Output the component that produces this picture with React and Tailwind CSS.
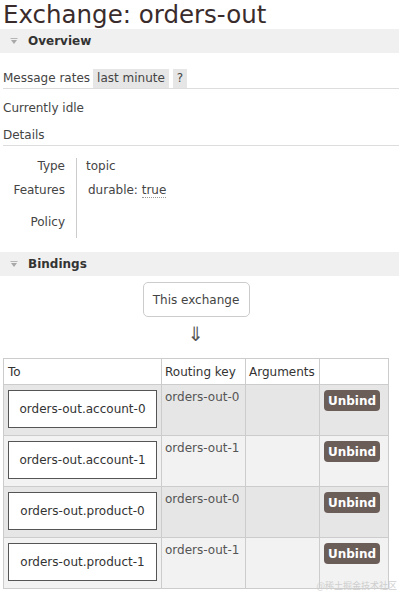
import React from "react";

const F = { fontFamily: '"DejaVu Sans", Verdana, sans-serif' };

function Tri() {
  return (
    <svg width="8" height="7" viewBox="0 0 8 7" className="block">
      <line x1="0.5" y1="0.5" x2="7.5" y2="0.5" stroke="#b5b5b5" strokeWidth="1" />
      <path d="M1 2 L7 2 L4 6 Z" fill="#a8a8a8" />
    </svg>
  );
}

function SectionBar({ title }) {
  return (
    <div className="h-[24px] bg-[#f0f0f0] flex items-center pl-[10px]">
      <Tri />
      <span className="ml-[10px] text-[12px] font-bold text-[#333] leading-[16px]">{title}</span>
    </div>
  );
}

const rows = [
  { to: "orders-out.account-0", key: "orders-out-0" },
  { to: "orders-out.account-1", key: "orders-out-1" },
  { to: "orders-out.product-0", key: "orders-out-0" },
  { to: "orders-out.product-1", key: "orders-out-1" },
];

export default function App() {
  return (
    <div className="relative w-[399px] h-[595px] bg-white overflow-hidden text-[#444]" style={F}>
      <h1 className="h-[29px] pl-[3px] text-[24.5px] leading-[29px] font-normal text-[#3a2c2c] whitespace-nowrap">
        Exchange: orders-out
      </h1>
      <SectionBar title="Overview" />

      <div className="mt-[16px] ml-[3px] border-b border-[#dddddd] flex items-stretch text-[12px] leading-[19px]">
        <span className="h-[19px] pr-[3px]">Message rates</span>
        <span className="h-[19px] bg-[#e6e6e6] px-[4px]">last minute</span>
        <span className="h-[19px] bg-[#e6e6e6] px-[4px] ml-[4px]">?</span>
      </div>

      <div className="mt-[11px] ml-[3px] text-[12px] leading-[16px]">Currently idle</div>
      <div className="mt-[11px] ml-[3px] pb-[2px] border-b border-[#dddddd] text-[12px] leading-[16px]">Details</div>

      <div className="mt-[12px] flex text-[12px] leading-[16px]">
        <div className="w-[76px] pr-[11px] text-right flex flex-col">
          <div className="h-[16px]">Type</div>
          <div className="h-[16px] mt-[8px]">Features</div>
          <div className="h-[16px] mt-[16px]">Policy</div>
          <div className="h-[8px]" />
        </div>
        <div className="border-l border-[#cccccc] pl-[9px] flex flex-col">
          <div className="h-[16px]">topic</div>
          <div className="h-[16px] mt-[8px] ml-[2px]">
            durable: <span className="border-b border-dotted border-[#999]">true</span>
          </div>
        </div>
      </div>

      <div className="mt-[14px]">
        <SectionBar title="Bindings" />
      </div>

      <div className="ml-[3px] w-[386px] flex flex-col items-center">
        <div className="mt-[6px] w-[107px] h-[35px] border border-[#cccccc] rounded-[5px] flex items-center justify-center text-[12px] text-[#444]">
          This exchange
        </div>
        <div className="h-[41px] flex items-start justify-center pt-[5px] text-[20px] leading-[24px] text-[#555]">
          ⇓
        </div>
      </div>

      <div className="ml-[3px] w-[386px] border-l border-t border-[#cccccc] text-[12px] leading-[16px]">
        <div className="flex bg-white text-[#333]">
          <div className="w-[158px] h-[26px] border-r border-b border-[#cccccc] pl-[4px] pt-[5px]">To</div>
          <div className="w-[84px] h-[26px] border-r border-b border-[#cccccc] pl-[3px] pt-[5px]">Routing key</div>
          <div className="w-[74px] h-[26px] border-r border-b border-[#cccccc] pl-[3px] pt-[5px]">Arguments</div>
          <div className="w-[69px] h-[26px] border-r border-b border-[#cccccc]" />
        </div>
        {rows.map((r, i) => (
          <div key={i} className={"flex " + (i % 2 === 0 ? "bg-[#e6e6e6]" : "bg-[#f2f2f2]")}>
            <div className="w-[158px] h-[51px] border-r border-b border-[#cccccc] pl-[4px] pt-[5px]">
              <div className="w-[149px] h-[38px] bg-white border border-[#555555] flex items-center justify-center text-[#333]">
                {r.to}
              </div>
            </div>
            <div className="w-[84px] h-[51px] border-r border-b border-[#cccccc] pl-[3px] pt-[4px] text-[#555]">
              {r.key}
            </div>
            <div className="w-[74px] h-[51px] border-r border-b border-[#cccccc]" />
            <div className="w-[69px] h-[51px] border-r border-b border-[#cccccc] pl-[4px] pt-[5px]">
              <div className="w-[56px] h-[21px] rounded-[4px] bg-[#6b5d58] text-white font-bold flex items-center justify-center">
                Unbind
              </div>
            </div>
          </div>
        ))}
      </div>

      <div
        className="absolute right-[2px] top-[580px] text-[9px] leading-[12px] text-[#cfcfcf]"
        style={{ fontFamily: '"Noto Sans CJK SC", sans-serif' }}
      >
        @稀土掘金技术社区
      </div>
    </div>
  );
}
